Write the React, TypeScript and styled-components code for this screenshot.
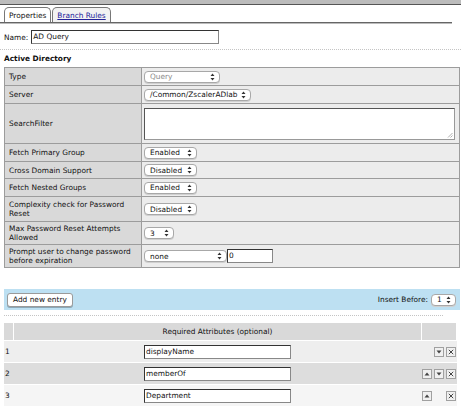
import React from 'react';
import styled, { createGlobalStyle } from 'styled-components';

const GlobalStyle = createGlobalStyle`
	body {
		margin: 0;
		background: #ffffff;
		font-family: "DejaVu Sans", Verdana, sans-serif;
		font-size: 7.4px;
		color: #111;
	}
`;

const Page = styled.div`
	width: 461px;
`;

const TopBar = styled.div`
	height: 4px;
	background: #bcbcbc;
	border-bottom: 1px solid #555;
`;

const TabStrip = styled.div`
	display: flex;
	gap: 1px;
	width: 448px;
	padding: 2px 0 0 4px;
	border-bottom: 1px solid #666;
	box-shadow: 0 1px 0 #bbb;
`;

const Tab = styled.div<{ $active?: boolean }>`
	height: 14px;
	line-height: 15px;
	padding: 0 4px;
	border: 1px solid #777;
	border-bottom: none;
	border-radius: 5px 5px 0 0;
	background: ${p => (p.$active ? '#fff' : '#f2f2f2')};
	color: ${p => (p.$active ? '#111' : '#23239a')};
	text-decoration: ${p => (p.$active ? 'none' : 'underline')};
`;

const NameRow = styled.div`
	display: flex;
	align-items: center;
	gap: 3px;
	padding: 7px 0 0 4px;
`;

const TextBox = styled.div<{ $w: number }>`
	width: ${p => p.$w}px;
	height: 12px;
	line-height: 12px;
	padding-left: 1px;
	border: 1px solid #333;
	border-right-color: #888;
	border-bottom-color: #888;
	background: #fff;
	box-sizing: content-box;
`;

const Dotted = styled.div<{ $w?: number }>`
	margin: ${p => (p.$w ? '0 0 0 4px' : '0')};
	width: ${p => (p.$w ? `${p.$w}px` : '100%')};
	border-top: 1px dotted #c4c4c4;
`;

const Spacer = styled.div<{ $h: number }>`
	height: ${p => p.$h}px;
`;

const SectionTitle = styled.div`
	font-weight: bold;
	padding: 4px 0 0 4px;
	height: 10px;
`;

const FormTable = styled.table`
	margin: 3px 0 0 4px;
	width: 456px;
	border-collapse: collapse;
	border: 1px solid #8c8c8c;
`;

const LabelCell = styled.td<{ $h: number }>`
	width: 128px;
	height: ${p => p.$h}px;
	padding: 0 4px;
	background: #d9d9d9;
	border: 1px solid #9c9c9c;
	line-height: 9px;
	vertical-align: middle;
`;

const ValueCell = styled.td`
	background: #ececec;
	border: 1px solid #9c9c9c;
	padding: 0 2px;
	vertical-align: middle;
`;

const ValueRow = styled.div`
	display: flex;
	align-items: center;
`;

const SelectBox = styled.div<{ $w: number; $dim?: boolean }>`
	display: flex;
	align-items: center;
	justify-content: space-between;
	width: ${p => p.$w}px;
	height: 12px;
	padding: 0 4px 0 5px;
	box-sizing: border-box;
	border: 1px solid #a8a8a8;
	border-radius: 4px;
	background: #fff;
	color: ${p => (p.$dim ? '#8a8a8a' : '#111')};
	box-shadow: 0 1px 0 #d0d0d0;
`;

const TextArea = styled.div`
	height: 30px;
	margin: 2px 2px 2px 0;
	border: 1px solid #555;
	border-right-color: #999;
	border-bottom-color: #999;
	background: #fff;
	position: relative;
`;

const Grip = styled.svg`
	position: absolute;
	right: 1px;
	bottom: 1px;
`;

const BlueBar = styled.div`
	display: flex;
	align-items: center;
	justify-content: space-between;
	margin: 21px 0 0 4px;
	width: 456px;
	height: 21px;
	padding: 0 4px 0 3px;
	box-sizing: border-box;
	background: #bde0f2;
`;

const Button = styled.div`
	height: 12px;
	line-height: 12px;
	padding: 0 5px;
	border: 1px solid #9a9a9a;
	border-radius: 3px;
	background: #fff;
	box-shadow: 0 1px 0 #8aa8b8;
`;

const InsertGroup = styled.div`
	display: flex;
	align-items: center;
	gap: 3px;
`;

const AttrTable = styled.table`
	margin: 7px 0 0 4px;
	width: 453px;
	border-collapse: collapse;
`;

const HeadCell = styled.th<{ $w?: number }>`
	width: ${p => (p.$w ? `${p.$w}px` : 'auto')};
	height: 17px;
	padding: 0;
	font-weight: normal;
	background: #d9d9d9;
	border-right: 1px solid #fff;
	text-align: center;
`;

const AttrRow = styled.tr<{ $bg: string }>`
	background: ${p => p.$bg};
	border-top: 1px solid #fff;
`;

const NumCell = styled.td`
	height: 21px;
	padding: 0 0 0 1px;
`;

const InputCell = styled.td`
	text-align: center;
	padding: 0;
	& > div {
		margin: 0 auto;
		text-align: left;
	}
`;

const ActionCell = styled.td`
	padding: 0 1px 0 0;
`;

const Actions = styled.div`
	display: flex;
	justify-content: flex-end;
	gap: 2px;
`;

const IconBtn = styled.div<{ $hidden?: boolean }>`
	width: 8px;
	height: 8px;
	border: 1px solid #a0a0a0;
	background: #f0f0f0;
	display: flex;
	align-items: center;
	justify-content: center;
	visibility: ${p => (p.$hidden ? 'hidden' : 'visible')};
`;

const Arrows = () => (
	<svg width="5" height="8" viewBox="0 0 5 8">
		<path d="M2.5 0.5 L4.5 3 L0.5 3 Z M2.5 7.5 L4.5 5 L0.5 5 Z" fill="#333" />
	</svg>
);

function Select({ w, value, dim }: { w: number; value: string; dim?: boolean }) {
	return (
		<SelectBox $w={w} $dim={dim}>
			<span>{value}</span>
			<Arrows />
		</SelectBox>
	);
}

const Up = () => (
	<IconBtn>
		<svg width="6" height="4" viewBox="0 0 6 4">
			<path d="M3 0.5 L5.5 3.5 L0.5 3.5 Z" fill="#444" />
		</svg>
	</IconBtn>
);

const Down = ({ hidden }: { hidden?: boolean }) => (
	<IconBtn $hidden={hidden}>
		<svg width="6" height="4" viewBox="0 0 6 4">
			<path d="M0.5 0.5 L5.5 0.5 L3 3.5 Z" fill="#444" />
		</svg>
	</IconBtn>
);

const Close = () => (
	<IconBtn>
		<svg width="6" height="6" viewBox="0 0 6 6">
			<path d="M0.8 0.8 L5.2 5.2 M5.2 0.8 L0.8 5.2" stroke="#444" strokeWidth="1" />
		</svg>
	</IconBtn>
);

const ATTRS = [
	{ n: 1, value: 'displayName', bg: '#eeeeee', up: false, down: true },
	{ n: 2, value: 'memberOf', bg: '#dddddd', up: true, down: true },
	{ n: 3, value: 'Department', bg: '#f5f5f5', up: true, down: false },
];

const FIELDS = [
	{ label: 'Type', h: 17, w: 76, value: 'Query', dim: true },
	{ label: 'Server', h: 17, w: 107, value: '/Common/ZscalerADlab' },
];

const TOGGLES = [
	{ label: 'Fetch Primary Group', h: 17, w: 53, value: 'Enabled' },
	{ label: 'Cross Domain Support', h: 16, w: 53, value: 'Disabled' },
	{ label: 'Fetch Nested Groups', h: 17, w: 53, value: 'Enabled' },
	{ label: 'Complexity check for Password Reset', h: 24, w: 53, value: 'Disabled' },
	{ label: 'Max Password Reset Attempts Allowed', h: 22, w: 30, value: '3' },
];

function App() {
	return (
		<Page>
			<GlobalStyle />
			<TopBar />
			<TabStrip>
				<Tab $active>Properties</Tab>
				<Tab>Branch Rules</Tab>
			</TabStrip>
			<NameRow>
				<span>Name:</span>
				<TextBox $w={185}>AD Query</TextBox>
			</NameRow>
			<Spacer $h={5} />
			<Dotted />
			<SectionTitle>Active Directory</SectionTitle>
			<FormTable>
				<tbody>
					{FIELDS.map(f => (
						<tr key={f.label}>
							<LabelCell $h={f.h}>{f.label}</LabelCell>
							<ValueCell>
								<Select w={f.w} value={f.value} dim={f.dim} />
							</ValueCell>
						</tr>
					))}
					<tr>
						<LabelCell $h={39}>SearchFilter</LabelCell>
						<ValueCell>
							<TextArea>
								<Grip width="6" height="6" viewBox="0 0 6 6">
									<path d="M5.5 1 L1 5.5 M5.5 3.5 L3.5 5.5" stroke="#999" strokeWidth="0.8" />
								</Grip>
							</TextArea>
						</ValueCell>
					</tr>
					{TOGGLES.map(f => (
						<tr key={f.label}>
							<LabelCell $h={f.h}>{f.label}</LabelCell>
							<ValueCell>
								<Select w={f.w} value={f.value} />
							</ValueCell>
						</tr>
					))}
					<tr>
						<LabelCell $h={22}>Prompt user to change password before expiration</LabelCell>
						<ValueCell>
							<ValueRow>
								<Select w={83} value="none" />
								<TextBox $w={43}>0</TextBox>
							</ValueRow>
						</ValueCell>
					</tr>
				</tbody>
			</FormTable>
			<BlueBar>
				<Button>Add new entry</Button>
				<InsertGroup>
					<span>Insert Before:</span>
					<Select w={25} value="1" />
				</InsertGroup>
			</BlueBar>
			<Spacer $h={5} />
			<Dotted $w={439} />
			<AttrTable>
				<thead>
					<tr>
						<HeadCell $w={9} />
						<HeadCell>Required Attributes (optional)</HeadCell>
						<HeadCell $w={34} />
					</tr>
				</thead>
				<tbody>
					{ATTRS.map(a => (
						<AttrRow key={a.n} $bg={a.bg}>
							<NumCell>{a.n}</NumCell>
							<InputCell>
								<TextBox $w={144}>{a.value}</TextBox>
							</InputCell>
							<ActionCell>
								<Actions>
									{a.up && <Up />}
									<Down hidden={!a.down} />
									<Close />
								</Actions>
							</ActionCell>
						</AttrRow>
					))}
				</tbody>
			</AttrTable>
		</Page>
	);
}

export default App;
